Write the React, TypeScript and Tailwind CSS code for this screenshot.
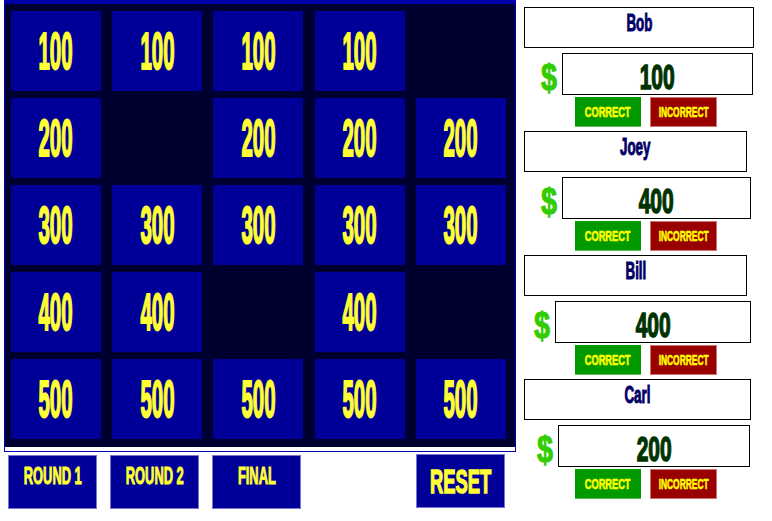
import React from "react";

// Impact-style condensed text: bold Liberation Sans squeezed horizontally
function Squeeze({ children, scale }: { children: React.ReactNode; scale: string }) {
  return <span className={`inline-block whitespace-nowrap ${scale}`}>{children}</span>;
}

const board: (number | null)[][] = [
  [100, 100, 100, 100, null],
  [200, null, 200, 200, 200],
  [300, 300, 300, 300, 300],
  [400, 400, null, 400, null],
  [500, 500, 500, 500, 500],
];

const players = [
  { name: "Bob", score: 100, nameW: "w-[230px]", rowMl: "ml-[15px]", boxW: "w-[191px]" },
  { name: "Joey", score: 400, nameW: "w-[223px]", rowMl: "ml-[15px]", boxW: "w-[189px]" },
  { name: "Bill", score: 400, nameW: "w-[223px]", rowMl: "ml-[8px]", boxW: "w-[196px]" },
  { name: "Carl", score: 200, nameW: "w-[227px]", rowMl: "ml-[11px]", boxW: "w-[192px]" },
];

function PlayerCard({ p }: { p: (typeof players)[number] }) {
  return (
    <div className="flex flex-col mb-[4px]">
      {/* Name */}
      <div
        className={`h-[41px] ${p.nameW} border border-black bg-white text-center pt-[4px] text-[23px] leading-none text-[#000066] [-webkit-text-stroke:1px_currentColor]`}
      >
        <Squeeze scale="scale-x-[0.58]">{p.name}</Squeeze>
      </div>

      {/* Score */}
      <div className={`flex items-end mt-[5px] ${p.rowMl}`}>
        <span className="w-[15px] mr-[8px] text-[36px] leading-none text-[#33cc00] text-center translate-y-[1px] [-webkit-text-stroke:1px_currentColor]">
          <Squeeze scale="scale-x-[0.8]">$</Squeeze>
        </span>
        <div
          className={`h-[42px] ${p.boxW} border border-black bg-white text-center pt-[5px] text-[35px] leading-none text-[#003300] [-webkit-text-stroke:1.5px_currentColor]`}
        >
          <Squeeze scale="scale-x-[0.6]">{p.score}</Squeeze>
        </div>
      </div>

      {/* Answer buttons */}
      <div className="flex gap-[9px] ml-[51px] mt-[2px]">
        <button className="w-[66px] h-[30px] bg-[#009900] border-b border-[#66bb66] text-[#ffff00] text-[14px] leading-none flex items-center justify-center [-webkit-text-stroke:0.6px_currentColor]">
          <Squeeze scale="scale-x-[0.66]">CORRECT</Squeeze>
        </button>
        <button className="w-[67px] h-[30px] bg-[#990000] border border-[#cc7777] text-[#ffff00] text-[14px] leading-none flex items-center justify-center [-webkit-text-stroke:0.6px_currentColor]">
          <Squeeze scale="scale-x-[0.6]">INCORRECT</Squeeze>
        </button>
      </div>
    </div>
  );
}

export default function App() {
  return (
    <div className="w-[772px] h-[521px] bg-white flex font-['Liberation_Sans',Arial,sans-serif] font-bold overflow-hidden">
      {/* ── Game board ── */}
      <div className="w-[516px] pl-[4px] flex flex-col">
        <div className="w-[512px] h-[452px] border-x border-b border-[#0000bb]">
          <div className="h-[447px] bg-[#000030] border-t-4 border-[#0000aa] pl-[6px] pt-[7px]">
            <div className="grid grid-cols-[repeat(5,90px)] auto-rows-[80px] gap-x-[11.2px] gap-y-[7px]">
              {board.flat().map((v, i) =>
                v === null ? (
                  <div key={i} />
                ) : (
                  <div
                    key={i}
                    className="bg-[#000099] flex items-center justify-center text-[51px] leading-none text-[#ffff33] [-webkit-text-stroke:2px_currentColor]"
                  >
                    <Squeeze scale="scale-x-[0.4]">{v}</Squeeze>
                  </div>
                )
              )}
            </div>
          </div>
        </div>

        {/* Round controls */}
        <div className="flex items-start mt-[3px] pl-[4px]">
          {["ROUND 1", "ROUND 2", "FINAL"].map((label) => (
            <button
              key={label}
              className="w-[89px] h-[54px] mr-[13px] bg-[#000099] border border-[#7777cc] text-[#ffff33] text-[23px] leading-none pt-[9px] flex justify-center items-start [-webkit-text-stroke:1px_currentColor]"
            >
              <Squeeze scale="scale-x-[0.56]">{label}</Squeeze>
            </button>
          ))}
          <button className="w-[89px] h-[54px] ml-[102px] -mt-[1px] bg-[#000099] border border-[#7777cc] text-[#ffff33] text-[34px] leading-none pt-[9px] flex justify-center items-start [-webkit-text-stroke:1.5px_currentColor]">
            <Squeeze scale="scale-x-[0.54]">RESET</Squeeze>
          </button>
        </div>
      </div>

      {/* ── Players ── */}
      <div className="ml-[8px] pt-[7px] flex flex-col">
        {players.map((p) => (
          <PlayerCard key={p.name} p={p} />
        ))}
      </div>
    </div>
  );
}
